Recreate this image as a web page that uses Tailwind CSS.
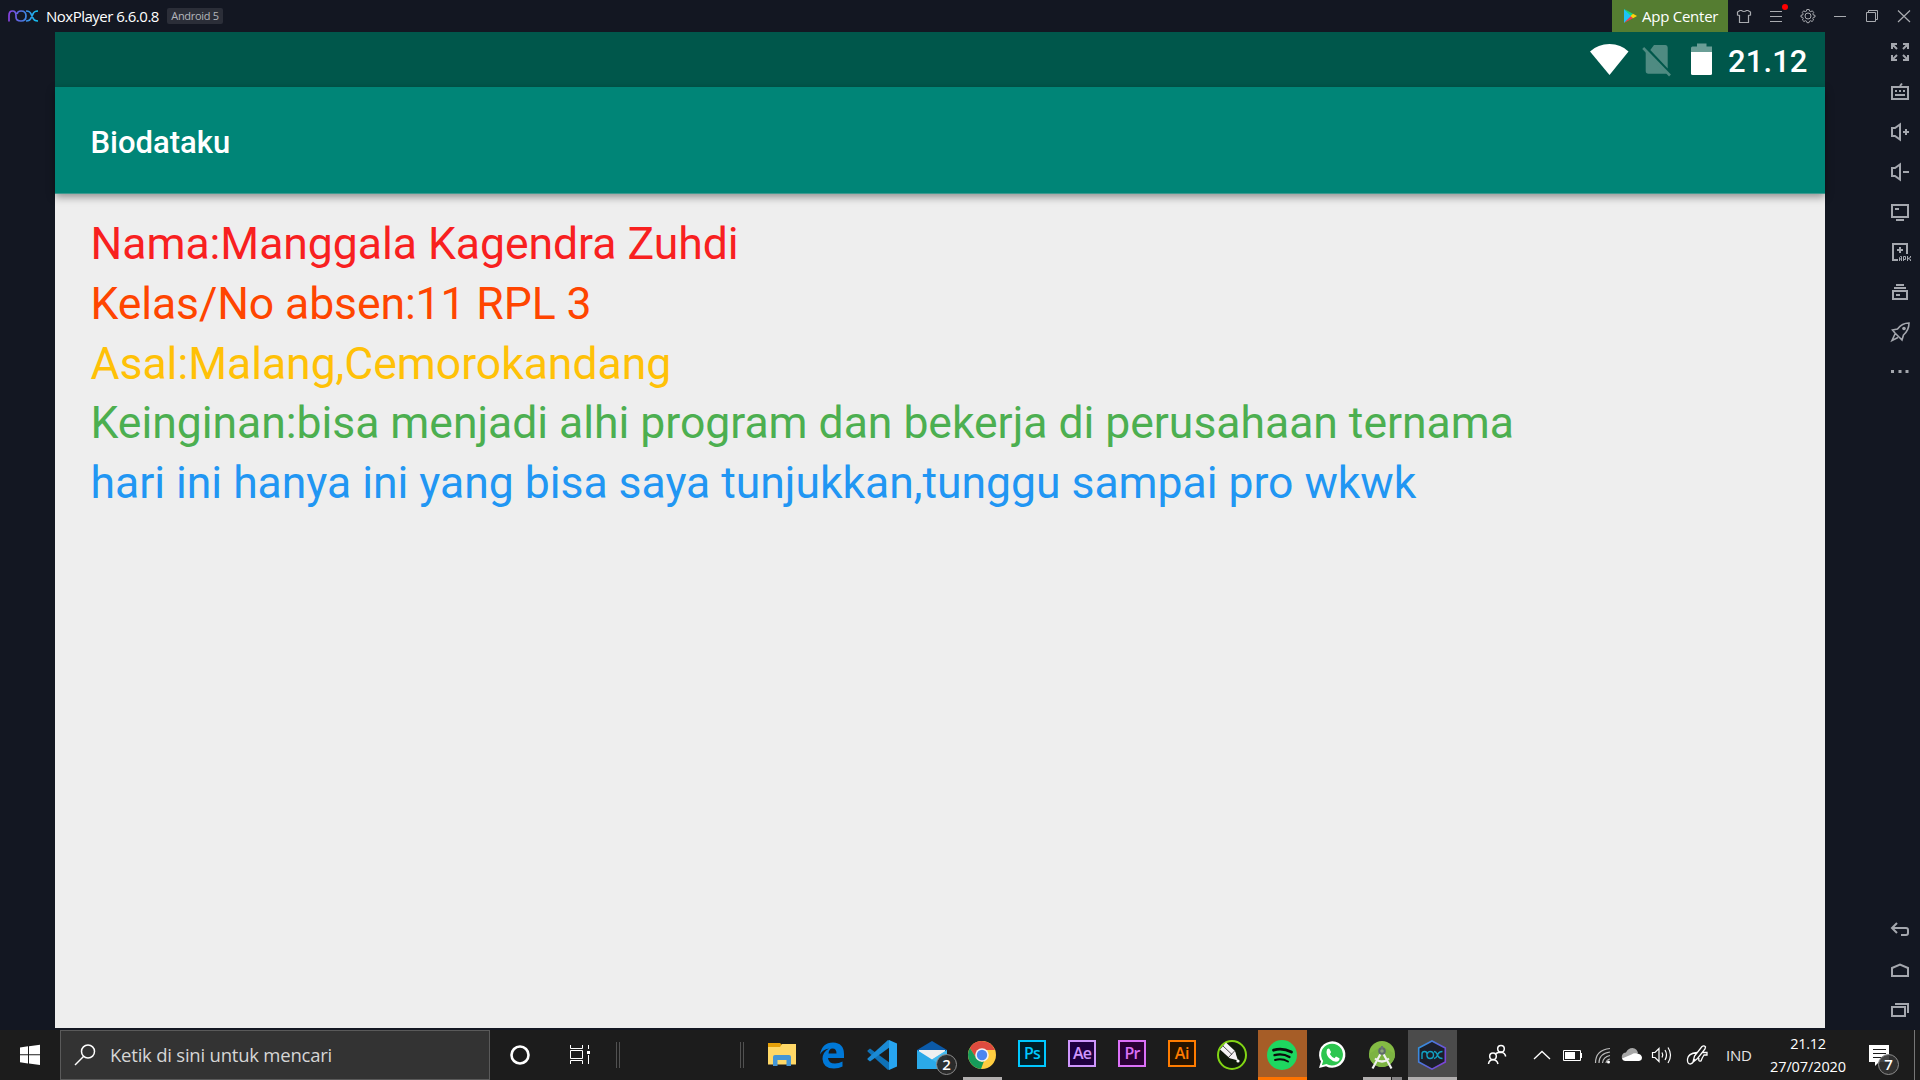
<!DOCTYPE html>
<html lang="id">
<head>
<meta charset="utf-8">
<title>NoxPlayer</title>
<script src="https://cdn.jsdelivr.net/npm/@tailwindcss/browser@4"></script>
</head>
<body class="w-[1920px] h-[1080px] overflow-hidden bg-[#131722] flex flex-col font-['Open_Sans',sans-serif]">
<!-- title bar -->
<header class="h-8 shrink-0 flex items-center text-white">
  <svg class="ml-2 w-[30px] h-3" viewBox="0 0 30 12" fill="none" stroke-width="1.7">
    <defs><linearGradient id="nx" gradientUnits="userSpaceOnUse" x1="0" y1="0" x2="30" y2="0"><stop offset="0" stop-color="#8a3fe0"/><stop offset=".5" stop-color="#4a78e0"/><stop offset="1" stop-color="#10c4f0"/></linearGradient></defs>
    <path stroke="url(#nx)" d="M1 11.500V5.500Q1 1 4.500 1T8 5.500V7Q8 11 13 11Q18 11 18 6T13 1Q9.500 1 9 4M18 1Q22 1 23 4L25 8Q26 11 30 11M18 11Q22 11 23 8L25 4Q26 1 30 1"/>
  </svg>
  <span class="ml-2 w-[113px] text-[15px] leading-8 tracking-[-0.5px] whitespace-nowrap">NoxPlayer 6.6.0.8</span>
  <span class="ml-2 w-14 h-4 rounded-[2px] bg-[#2b2e38] text-[#b4b6bb] text-[11px] leading-4 text-center tracking-[-0.3px] whitespace-nowrap">Android 5</span>
  <div class="ml-auto w-[116px] h-8 bg-[#557d31] flex items-center pl-3">
    <svg class="w-[13px] h-[14px]" viewBox="0 0 13 14"><path fill="#1cc3f5" d="M0 0L8 7 0 14z"/><path fill="#12d880" d="M0 0L9 4.700 7 7z"/><path fill="#f23a4c" d="M0 14L9 9.300 7 7z"/><path fill="#ffd30c" d="M9 4.700L13 7 9 9.300 6.500 7z"/></svg>
    <span class="ml-[5px] text-[15px] leading-8 tracking-[-0.25px] whitespace-nowrap">App Center</span>
  </div>
  <div class="relative flex">
    <svg class="w-8 h-8" viewBox="0 0 32 32" fill="none" stroke="#a9abb0" stroke-width="1.200"><path d="M12 10.500L9.500 12 9.500 15 11.500 15.500V22.500H20.500V15.500L22.500 15V12L20 10.500H18.500Q16 12.500 13.500 10.500z"/></svg>
    <svg class="w-8 h-8" viewBox="0 0 32 32" fill="none" stroke="#a9abb0"><path d="M10 11.500H22M10 16.500H22M10 21.500H22"/><circle cx="25" cy="7" r="3" fill="#f00" stroke="none"/></svg>
    <svg class="w-8 h-8" viewBox="0 0 32 32" fill="none" stroke="#a9abb0"><path d="M14.800 9.500H17.200L17.600 11.200 18.800 11.700 20.300 10.800 21.700 12.500 20.900 13.800 21.300 15 23 15.300V17L21.300 17.400 20.800 18.600 21.600 20 20 21.500 18.700 20.700 17.500 21.200 17 22.700H15L14.500 21.200 13.300 20.700 12 21.500 10.400 20 11.200 18.600 10.700 17.400 9 17V15.300L10.700 15 11.100 13.800 10.300 12.500 11.700 10.800 13.200 11.700 14.400 11.200z"/><circle cx="16" cy="16" r="3"/></svg>
    <svg class="w-8 h-8" viewBox="0 0 32 32" fill="none" stroke="#a9abb0"><path d="M10 16.500H22"/></svg>
    <svg class="w-8 h-8" viewBox="0 0 32 32" fill="none" stroke="#a9abb0"><path d="M10.500 12.500H19.500V21.500H10.500zM12.500 12.500V10.500H21.500V19.500H19.500"/></svg>
    <svg class="w-8 h-8" viewBox="0 0 32 32" fill="none" stroke="#a9abb0" stroke-width="1.200"><path d="M10 10.500L22 22M22 10.500L10 22"/></svg>
  </div>
</header>

<div class="h-[998px] shrink-0 flex">
  <!-- emulated device -->
  <main class="ml-[55px] w-[1770px] h-[996px] bg-[#eeeeee] flex flex-col font-[Roboto,sans-serif]">
    <div class="h-[55px] shrink-0 bg-[#00574b] flex items-center">
      <svg class="ml-[1535px] w-[39px] h-[55px]" viewBox="0 0 39 55"><path fill="#fff" d="M0 19.500Q8 12 19.500 12T38.500 19.500L19.500 43z"/></svg>
      <svg class="ml-[13px] w-[30px] h-[55px]" viewBox="0 0 30 55"><path fill="#4f8b82" d="M12 13H23.500Q25.700 13 25.700 15.500V36.500L8.300 18zM3.700 18L26 41Q25 41.700 23.500 41.700H6.500Q3.700 41.700 3.700 39z"/><path stroke="#4f8b82" stroke-width="2.600" d="M1.200 16L28 43.500"/></svg>
      <svg class="ml-[19px] w-[22px] h-[55px]" viewBox="0 0 22 55"><path fill="#6a9e96" d="M6 11.500H15.500V14.500H21V20.500H0V16Q0 14.500 1.500 14.500H6z"/><path fill="#fff" d="M0 20H21V41.500Q21 43 19.500 43H1.500Q0 43 0 41.500z"/></svg>
      <span class="ml-[15px] text-[31px] font-medium tracking-[0.1px] text-white leading-[55px] pt-[3px]">21.12</span>
    </div>
    <div class="h-[107px] shrink-0 bg-[#008577] border-b border-[#3f9a90] shadow-[0_3px_8px_rgba(0,0,0,0.4)] pl-[35.500px] pt-[3px] leading-[105px] text-[31px] font-medium text-white"><span>Biodataku</span></div>
    <div class="pl-[35.500px] pt-[21px] flex flex-col items-start text-[44.500px] leading-[59.800px] tracking-[-0.03px] whitespace-nowrap">
      <p class="text-[#f8201f]">Nama:Manggala Kagendra Zuhdi</p>
      <p class="text-[#ff4500] tracking-[-0.1px]">Kelas/No absen:11 RPL 3</p>
      <p class="text-[#ffc107]">Asal:Malang,Cemorokandang</p>
      <p class="text-[#4caf50]">Keinginan:bisa menjadi alhi program dan bekerja di perusahaan ternama</p>
      <p class="text-[#2196f3]">hari ini hanya ini yang bisa saya tunjukkan,tunggu sampai pro wkwk</p>
    </div>
  </main>
  <!-- emulator tool strip -->
  <aside class="ml-auto w-10 flex flex-col items-center">
    <svg class="w-6 h-10" viewBox="0 -8 24 40" fill="none" stroke="#a4a7ae" stroke-width="2"><path d="M4 9V4H9M15 4H20V9M4 15V20H9M15 20H20V15M4 4L9 9M20 4L15 9M4 20L9 15M20 20L15 15"/></svg>
    <svg class="w-6 h-10" viewBox="0 -8 24 40" fill="none" stroke="#a4a7ae" stroke-width="2"><path d="M4 7H20V19H4zM7 11H9M11 11H13M15 11H17M7 15H17M12 6L14 3.500"/></svg>
    <svg class="w-6 h-10" viewBox="0 -8 24 40" fill="none" stroke="#a4a7ae" stroke-width="2"><path d="M4 8H7L12 4.500V19.500L7 16H4zM15 12H21M18 9V15"/></svg>
    <svg class="w-6 h-10" viewBox="0 -8 24 40" fill="none" stroke="#a4a7ae" stroke-width="2"><path d="M4 8H7L12 4.500V19.500L7 16H4zM15 12H21"/></svg>
    <svg class="w-6 h-10" viewBox="0 -8 24 40" fill="none" stroke="#a4a7ae" stroke-width="2"><path d="M4 5H20V17H4zM7 9H11M8 20H16"/></svg>
    <svg class="w-6 h-10" viewBox="0 -8 24 40" fill="none" stroke="#a4a7ae" stroke-width="2"><path d="M10 20H5V4H19V14M12 7V13M9 10H15"/><path stroke-width="1" d="M11.500 21V17.500L12.500 16.500H13.500V21M11.500 19H13.500M15.500 21V16.500H17.500V19.500H15.500M19.500 16V21M22.500 16V17.500L20 18.500 22.500 19.500V21"/></svg>
    <svg class="w-6 h-10" viewBox="0 -8 24 40" fill="none" stroke="#a4a7ae" stroke-width="2"><path d="M8 5H16M6 8H18M5 11H19V19H5zM8 15H12"/></svg>
    <svg class="w-6 h-10" viewBox="0 -8 24 40" fill="none" stroke="#a4a7ae" stroke-width="1.600"><path d="M21 3Q14 3 9.500 9L4.500 10 7 13 11.500 17.500 14 20 15.500 15Q21 10 21 3zM7 14L4 20.500 10 17.500"/><circle cx="16" cy="8.500" r="1.800" fill="#a4a7ae" stroke="none"/></svg>
    <svg class="w-6 h-10" viewBox="0 -8 24 40" fill="#a4a7ae"><path d="M3 10H6V13H3zM10.500 10H13.500V13H10.500zM17.500 10H20.500V13H17.500z"/></svg>
    <svg class="mt-auto w-6 h-10" viewBox="0 -8 24 40" fill="none" stroke="#a4a7ae" stroke-width="2"><path d="M9 5L4 10 9 15M4 10H18Q20 10 20 12V15Q20 17 18 17H13"/></svg>
    <svg class="w-6 h-10" viewBox="0 -8 24 40" fill="none" stroke="#a4a7ae" stroke-width="2"><path d="M4 18V10L12 6.500 20 10V18z"/></svg>
    <svg class="w-6 h-10" viewBox="0 -8 24 40" fill="none" stroke="#a4a7ae" stroke-width="2"><path d="M4 9H17V18H4zM7 6H20V15"/></svg>
  </aside>
</div>

<!-- windows taskbar -->
<footer class="h-[50px] shrink-0 bg-[#1c1c1c] flex text-white">
  <svg class="shrink-0 w-[60px] h-[50px]" viewBox="0 0 60 50" fill="#fff"><path d="M20 17.500L28 16.300V24.300H20zM29 16.200L40 14.700V24.300H29zM20 25.300H28V33.500L20 32.300zM29 25.300H40V35L29 33.600z"/></svg>
  <div class="shrink-0 w-[430px] h-[50px] border border-[#5a5a5a] bg-[#333333] flex items-center">
    <svg class="ml-3 w-[24px] h-[24px]" viewBox="0 0 24 24" fill="none" stroke="#fff" stroke-width="1.500"><circle cx="15" cy="8.500" r="6.500"/><path d="M10.500 13.500L2 22"/></svg>
    <span class="ml-[13px] text-[18.500px] text-[#d6d6d6] leading-[48px] tracking-[-0.22px] whitespace-nowrap">Ketik di sini untuk mencari</span>
  </div>
  <svg class="shrink-0 w-[60px] h-[50px]" viewBox="0 0 60 50" fill="none" stroke="#fff" stroke-width="2.600"><circle cx="30" cy="25" r="8.500"/></svg>
  <svg class="shrink-0 w-[60px] h-[50px]" viewBox="0 0 60 50" fill="none" stroke="#fff"><path d="M20.500 15V18.500H32.500V15M20.500 20.500H32.500V28.500H20.500zM20.500 34V30.500H32.500V34M38.500 15V19M38.500 25V34"/><path fill="#fff" stroke="none" d="M37 21H40V24H37z"/></svg>
  <svg class="shrink-0 w-[148px] h-[50px]" viewBox="0 0 148 50" stroke="#515151"><path d="M6.500 12V38M9.500 12V38M130.500 12V38M133.500 12V38"/></svg>

  <div class="shrink-0 flex gap-px">
    <!-- explorer -->
    <svg class="w-[49px] h-[50px]" viewBox="0 0 49 50"><path fill="#e5a009" d="M10 13H22L24 15V18H10z"/><path fill="#ffd867" d="M10 17H22L24 14H38V34.500H10z"/><path fill="#4496d6" d="M15 27Q15 25 17 25H31Q33 25 33 27V36H28.500V30H19.500V36H15z"/></svg>
    <!-- edge -->
    <svg class="w-[49px] h-[50px]" viewBox="0 0 49 50"><path fill="#0078d7" d="M12 24.500Q14 12.500 25 12.500Q36 13 36 24V28H20Q20.500 33.500 27 33.500Q31 33.500 34.500 31.500V36.500Q31 38.500 26 38.500Q15 38.500 14.500 29Q14.500 22 21 18.500Q14.500 19.500 12 24.500zM20.500 23.500H28.500Q28.500 18.500 24.500 18.500Q21 18.500 20.500 23.500z"/></svg>
    <!-- vs code -->
    <svg class="w-[49px] h-[50px]" viewBox="0 0 49 50"><path fill="#0f72b8" d="M9.500 20.500L12 18.500 32 33V39L30 40 9.500 21.500z"/><path fill="#1a8ad4" d="M9.500 29.500L12 31.500 32 17V11L30 10 9.500 28.500z"/><path fill="#27a4f0" d="M31 10L39 13.500V36.500L31 40V10z"/></svg>
    <!-- mail -->
    <div class="relative"><svg class="w-[49px] h-[50px]" viewBox="0 0 49 50"><path fill="#0b5aa8" d="M9 20L24 11 39 20V24H9z"/><path fill="#f0f0f0" d="M11 20H37V28L24 33 11 26z"/><path fill="#2ba9e8" d="M9 20L24 29.500 39 20V39H9z"/><path fill="#53c8f5" d="M24 29.500L39 20V39z" opacity=".6"/></svg>
      <span class="absolute left-[28px] top-[24px] w-[21px] h-[21px] rounded-full border border-[#8d8d8d] bg-[#2b2b2b]/95 text-[15px] leading-[19px] text-center font-semibold">2</span></div>
    <!-- chrome -->
    <svg class="w-[49px] h-[50px]" viewBox="0 0 49 50"><circle cx="24" cy="25" r="14" fill="#ffcd40"/><path fill="#de4b3f" d="M11.900 18A14 14 0 0 1 37 20H24L18 28z"/><path fill="#169b5a" d="M11.900 18L18.500 28.500 24 32 26 31 23 39A14 14 0 0 1 11.900 18z"/><circle cx="24" cy="25" r="6.800" fill="#f1f1f1"/><circle cx="24" cy="25" r="5.200" fill="#4a86f0"/><path fill="#b1aeae" d="M5 47H44V50H5z"/></svg>
    <!-- adobe -->
    <div class="w-[49px] flex justify-center pt-[10px] pr-px"><span class="w-7 h-[27px] border-2 border-[#00c8ff] bg-[#001d26] text-[#00c8ff] text-[16px] leading-[22px] text-center tracking-[-0.8px] font-semibold">Ps</span></div>
    <div class="w-[49px] flex justify-center pt-[10px] pr-px"><span class="w-7 h-[27px] border-2 border-[#cf96fd] bg-[#1f0040] text-[#cf96fd] text-[16px] leading-[22px] text-center tracking-[-1px] font-semibold">Ae</span></div>
    <div class="w-[49px] flex justify-center pt-[10px] pr-px"><span class="w-7 h-[27px] border-2 border-[#dc70f8] bg-[#2a0034] text-[#dc70f8] text-[16px] leading-[22px] text-center tracking-[-0.8px] font-semibold">Pr</span></div>
    <div class="w-[49px] flex justify-center pt-[10px] pr-px"><span class="w-7 h-[27px] border-2 border-[#ff7c00] bg-[#261300] text-[#ff7c00] text-[16px] leading-[22px] text-center tracking-[-0.2px] font-semibold">Ai</span></div>
    <!-- corel -->
    <svg class="w-[49px] h-[50px]" viewBox="0 0 49 50"><circle cx="24" cy="25" r="14" fill="#101c0c" stroke="#82d614" stroke-width="2"/><path fill="#f4f4f4" d="M12 19.500L18 12.500 27 21 28.500 28.500 21.500 28z"/><path stroke="#222" stroke-width=".8" fill="none" d="M15 16L24.500 25M20.500 27.500L27 20.500"/><path fill="#f4f4f4" d="M21 28L27 21.500 30 30.500z"/><circle cx="30" cy="31" r="1.600" fill="#fff"/></svg>
    <!-- spotify -->
    <div class="bg-[#a65d27] border-b-[3px] border-[#ff7300] h-[50px]"><svg class="w-[49px] h-[47px]" viewBox="0 0 49 47" fill="none" stroke="#0b0b0b" stroke-linecap="round"><circle cx="24" cy="25" r="15" fill="#1ed760" stroke="none"/><path stroke-width="2.800" d="M15.500 20.200Q24.500 17.500 33.500 22"/><path stroke-width="2.300" d="M16.500 25.200Q24.500 23 31.500 27"/><path stroke-width="1.900" d="M17 30Q24 28 30 31.500"/></svg></div>
    <!-- whatsapp -->
    <svg class="w-[49px] h-[50px]" viewBox="0 0 49 50"><path fill="#fff" d="M11 38L13 31.500A13.200 13.200 0 1 1 18 36.200z"/><path fill="#2cc64f" d="M13.800 35.200L15.200 31A10.900 10.900 0 1 1 18.500 34z"/><path fill="#fff" d="M19 19.500Q20.500 18 21.500 19L23 22Q23 23 21.800 24Q23.500 27 26.500 28.200L28 26.500 31.500 28.200Q31.500 31.500 28 31.700Q24.500 31.500 21 28Q17.500 24 19 19.500z"/></svg>
    <!-- android studio -->
    <svg class="w-[49px] h-[50px]" viewBox="0 0 49 50"><circle cx="24" cy="24" r="13" fill="#84bb44"/><path d="M11 24A13 13 0 0 0 37 24L24 16z" fill="#7cb342"/><path fill="none" stroke="#f0f0f0" stroke-width="2.200" d="M22.500 24L14.500 38.500M25.500 24L33.500 38.500M17 28.500Q24 34.500 31 28.500"/><circle cx="24" cy="21" r="2.800" fill="#8fa37c" stroke="#5f6b6b" stroke-width="2"/><path fill="#6b7676" d="M23 16H25V19H23z"/><path fill="#b1aeae" d="M5 47H33V50H5z"/><path fill="#848284" d="M34 47H44V50H34z"/></svg>
    <!-- nox -->
    <div class="bg-[#4b4b4b] border-b-[3px] border-[#b1aeae] h-[50px]"><svg class="w-[49px] h-[47px]" viewBox="0 0 49 47" fill="none"><defs><linearGradient id="hx" x1="0" y1="0" x2="1" y2=".6"><stop offset="0" stop-color="#2a9be0"/><stop offset="1" stop-color="#7b45d8"/></linearGradient></defs><path fill="#1c1f2a" stroke="url(#hx)" stroke-width="1.600" d="M24 11L37.300 18V32L24 39.200 10.700 32V18z"/><path stroke="#12a2c4" stroke-width="1.400" d="M14 29V24Q14 21.500 16.500 21.500T19 24V26Q19.500 28.500 22 28.500Q25.500 28.500 25.500 25T22 21.500Q20 21.500 19.500 23.500M26 21.500Q28 21.500 29 24L30 26Q31 28.500 34.500 28.500M26 28.500Q28 28.500 29 26L30 24Q31 21.500 34.500 21.500"/></svg></div>
  </div>

  <!-- tray -->
  <div class="shrink-0 ml-6 flex h-[50px]">
    <svg class="w-[45px] h-[50px]" viewBox="0 0 45 50" fill="none" stroke="#fff" stroke-width="1.500"><circle cx="20" cy="18.800" r="3.300"/><circle cx="12" cy="26.300" r="3.300"/><path d="M7.500 34Q8 29.700 12 29.700T17 34M15 23.500Q17 22.200 20 22.200Q24 22.500 24.700 26.500"/></svg>
    <svg class="w-[30px] h-[50px]" viewBox="0 0 30 50" fill="none" stroke="#fff" stroke-width="1.300"><path d="M8 29L16 21.500 24 29"/></svg>
    <svg class="w-[30px] h-[50px]" viewBox="0 0 30 50" fill="none" stroke="#fff"><path d="M7.500 20.500H24.500V30.500H7.500zM25.500 23V28"/><path fill="#fff" stroke="none" d="M9 22H19V29H9z"/></svg>
    <svg class="w-[30px] h-[50px]" viewBox="0 0 30 50" fill="none" stroke="#fff" stroke-width="1.200"><path stroke="#bbb" d="M9.500 33Q9.500 20 24 18.500M13 33Q13 23.500 24 22M16.500 33Q17 27 24 25.500M20 33Q20.500 29.500 24 29"/><circle cx="22.500" cy="32" r="1.500" fill="#fff" stroke="none"/></svg>
    <svg class="w-[30px] h-[50px]" viewBox="0 0 30 50"><path fill="#a6a6a6" d="M8 30Q5 29 6 25.500Q7 22.500 10 22.500Q12 18 16.500 18Q21 18.500 22 23L15 30z"/><path fill="#fff" d="M9 31Q6.500 30.500 6 28.500L15.500 24.500Q18 22.500 21 23.500Q25.500 24 26 27.500Q26 30.500 23 31z"/></svg>
    <svg class="w-[35px] h-[50px]" viewBox="0 0 35 50" fill="none" stroke="#fff" stroke-width="1.200"><path d="M6.500 22.500H9L13 18.500V31.500L9 27.500H6.500zM16 22.500Q17.500 25 16 27.500M19 20Q22 25 19 30M22 17.500Q27 25 22 33"/></svg>
    <svg class="w-[35px] h-[50px]" viewBox="0 0 35 50" fill="none" stroke="#fff" stroke-width="1.300"><path d="M12 32L13.500 26 21 16.500Q23 15 24.500 17L24 19 16.500 28.500zM16 22.500Q7 23.500 6.500 29Q6 34 9.500 34Q12.500 33 13.500 29M18 28Q17 32 20 31Q21 28 23 25H26V22.500H21.500"/></svg>
    <span class="w-[49px] pl-[10px] text-[15px] tracking-[-0.3px] leading-[50px] text-[#e4e4e4]">IND</span>
    <div class="w-[86px] pt-[2px] flex flex-col items-center text-[14.500px] leading-[23px] whitespace-nowrap"><span class="tracking-[-0.3px]">21.12</span><span class="tracking-[-0.1px]">27/07/2020</span></div>
  </div>
  <div class="shrink-0 relative ml-[6px]">
    <svg class="w-[48px] h-[50px]" viewBox="0 0 48 50"><path fill="#fff" d="M12 15H32V32H22L18 36V32H12z"/><path stroke="#1c1c1c" d="M16 19.500H29M16 23.500H29M16 27.500H25"/></svg>
    <span class="absolute left-[21px] top-[24px] w-[21px] h-[21px] rounded-full border border-[#8d8d8d] bg-[#333]/90 text-[15px] leading-[19px] text-center font-semibold">7</span>
  </div>
  <div class="ml-auto w-[6px] h-[50px] border-l border-[#777]"></div>
</footer>
</body>
</html>
